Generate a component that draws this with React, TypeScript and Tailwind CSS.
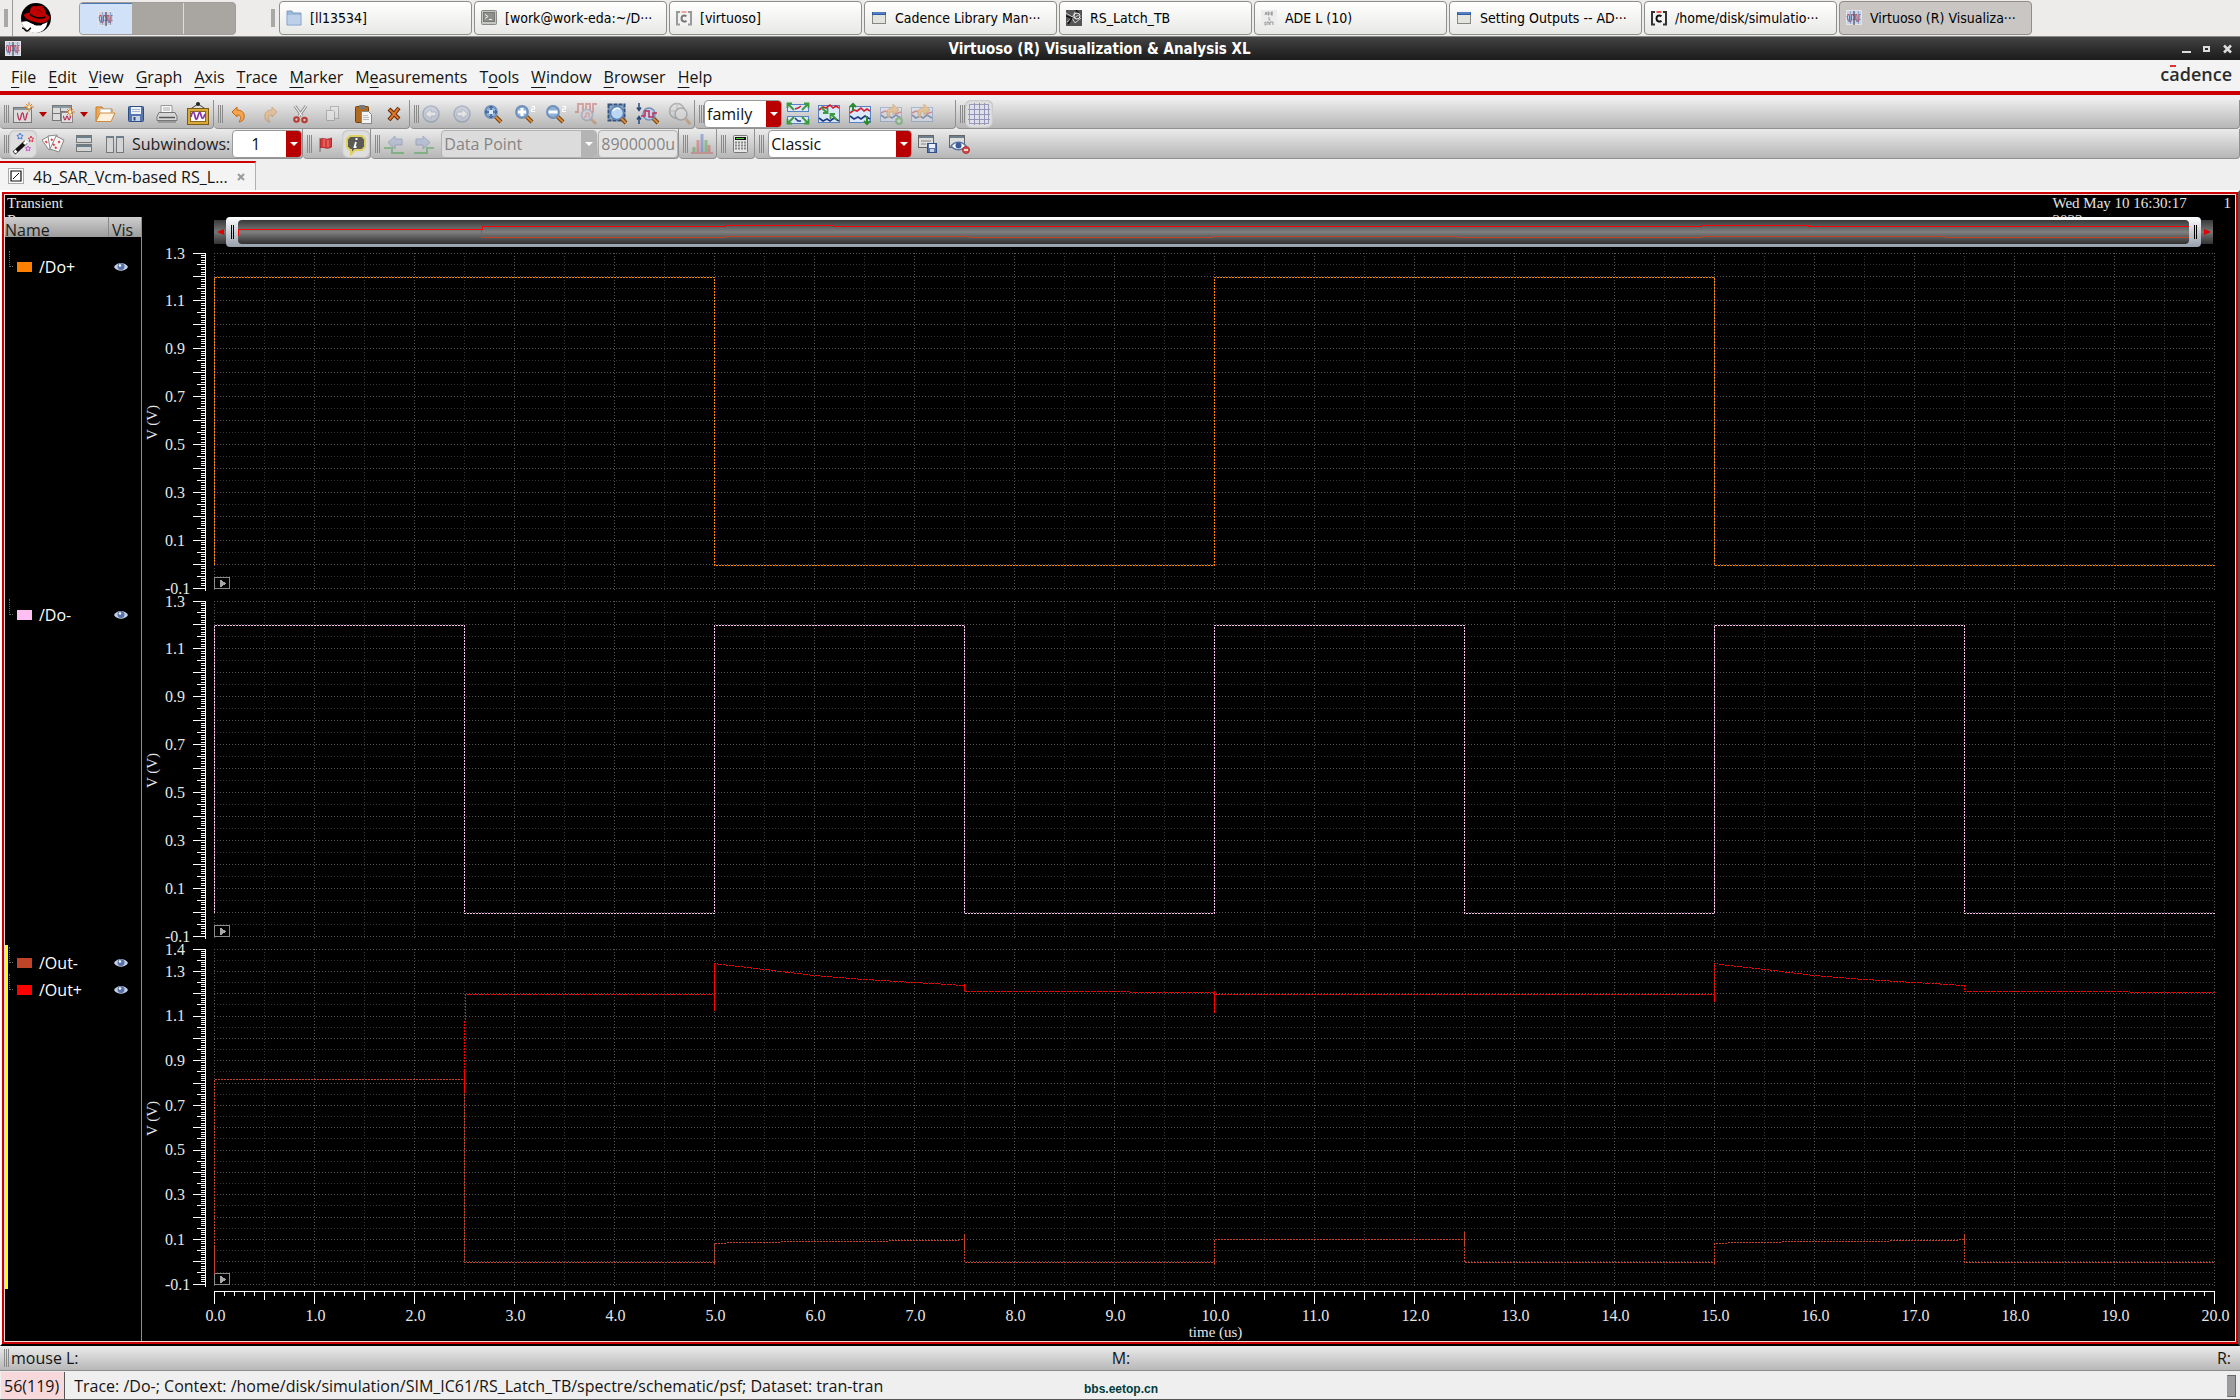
import React, { useLayoutEffect, useRef, useState } from "react";
import type { ReactNode, RefObject } from "react";

const UI = "font-['Open_Sans','Noto_Sans',sans-serif]";
const TASK = "font-['DejaVu_Sans_Condensed','DejaVu_Sans',sans-serif]";
const SERIF = "font-['Liberation_Serif',serif]";

/* ---------- icons ---------- */

function Svg({ w = 24, h = 24, children, faded }: { w?: number; h?: number; children: ReactNode; faded?: boolean }) {
  return (
    <svg width={w} height={h} viewBox={`0 0 ${w} ${h}`} fill="none" className={faded ? "block shrink-0 opacity-40" : "block shrink-0"} aria-hidden="true">
      {children}
    </svg>
  );
}

const WaveIcon = () => (
  <Svg w={16} h={16}>
    <rect x=".5" y=".5" width="15" height="14" fill="#c9d3e4" stroke="#e4e4e6" />
    <path d="M1 4.500h14M1 9.500h14M4.500 1v13M12.500 1v13" stroke="#8ea6d0" />
    <path d="M1.500 10V6l1-2 1 2v4l1 2 1-2V5l1-1 1 2M9 10V6l1-2 1 2v4l1 2 1-2V5l1-1" stroke="#c05060" />
    <path d="M1 6l1 4 1 2 1-2M9 6l1 4 1 2" stroke="#6a84b8" />
    <path d="M8 1v14" stroke="#334" />
  </Svg>
);

const FolderSmall = () => (
  <Svg w={16} h={16}>
    <path d="M1 3V1h5l1 2h8v12H1z" fill="#9db9da" stroke="#7f9dc4" />
    <path d="M1.500 5h13v9.500h-13z" fill="#bcd0ea" />
  </Svg>
);
const TerminalSmall = () => (
  <Svg w={16} h={16}>
    <rect x=".5" y=".5" width="15" height="14" rx="1" fill="#c6c7c3" stroke="#888a85" />
    <rect x="2.500" y="2.500" width="11" height="9" fill="#8d908b" stroke="#777975" />
    <path d="M4 4.500l3 2-3 2M8 9.500h3" stroke="#eee" />
  </Svg>
);
const CSmall = ({ dark }: { dark?: boolean }) => (
  <Svg w={16} h={16}>
    <rect x="1" y="2" width="14" height="12.500" fill="#f2f2f2" stroke={dark ? "#333" : "#999"} strokeWidth="2" />
    <path d="M4 2h8M4 14.500h8" stroke="#f2f2f2" strokeWidth="3" />
    <path d="M5.500 2h5" stroke={dark ? "#e02020" : "#ee8888"} strokeWidth="1.500" />
    <path d="M10.500 6.200c-3.500-2-5 .3-5 2.300s2 4.300 5 2.300" stroke={dark ? "#111" : "#777"} strokeWidth="2" />
  </Svg>
);
const WindowSmall = () => (
  <Svg w={16} h={16}>
    <rect x="1.500" y="2.500" width="13" height="11" fill="#e2e4dd" stroke="#858883" />
    <path d="M1 3.500h14" stroke="#2e5da8" strokeWidth="3" />
    <path d="M2 3h12" stroke="#7fa3d8" />
  </Svg>
);
const SchematicSmall = () => (
  <Svg w={16} h={16}>
    <rect width="16" height="16" fill="#555" />
    <path d="M0 3l8 5 6-4M1 12l5-4 3 5 6-5M9 2l-3 6" stroke="#ccc" />
    <path d="M0 6l6 2-4 6M10 0l3 4" stroke="#111" strokeWidth="1.500" />
    <circle cx="11" cy="6" r="3" stroke="#eee" />
  </Svg>
);
const AdeSmall = () => (
  <Svg w={16} h={16}>
    <rect width="16" height="16" fill="#ededed" />
    <path d="M4 5l1-3 1 3M7 2v3h1V2zM10 2v3h2M10 2h2M10 3.500h2M8 7v3h1.500M5 12h-1v3h1M6 15v-3h2v3M9 15v-3h3v3" stroke="#888" strokeWidth=".8" />
  </Svg>
);

const RedHat = () => (
  <Svg w={32} h={32}>
    <circle cx="16" cy="16" r="15" fill="#000" />
    <path d="M1.500 20c4-1 6-1 9 1 5 3 12 2 17-1-1 7-6 11-12 11S3 26 1.500 20z" fill="#fff" />
    <path d="M2 26c3 0 3 3 5 3s2-2 4-3" stroke="#000" strokeWidth="1.500" />
    <path d="M14 22c3 1 6 1 8 0" stroke="#000" strokeWidth="1.500" />
    <path d="M4 13c1-2 4-2 6-2 0-4 1-7 4-7 3 1 5-1 8 0 3 2 3 5 4 8 3 1 4 3 3 5-2 4-8 5-14 3-5-1-11-4-11-7z" fill="#c00000" />
    <path d="M9.500 12c4 4 11 5 16 3" stroke="#000" strokeWidth="1.600" />
    <path d="M17 7c1 2 4 1 5 4" stroke="#700" />
  </Svg>
);

const Spark = ({ x, y }: { x: number; y: number }) => (
  <g transform={`translate(${x} ${y})`}>
    <path d="M0-5V5M-5 0H5M-3-3L3 3M3-3L-3 3" stroke="#e0822a" />
    <circle r="1.500" fill="#fff0c0" />
  </g>
);
const NewGraph = () => (
  <Svg w={24} h={24}>
    <rect x="2.500" y="5.500" width="18" height="15" fill="#dcdcdc" stroke="#777" />
    <path d="M3 7h17" stroke="#8a9aa5" strokeWidth="2" />
    <path d="M6 11c1 0 1 7 2.500 7S10 11 11.500 11s1 7 2.500 7 1-7 3-7" stroke="#b8325a" strokeWidth="1.300" />
    <Spark x={18} y={5} />
  </Svg>
);
const NewSub = () => (
  <Svg w={24} h={24}>
    <rect x="1.500" y="3.500" width="19" height="15" fill="#dcdcdc" stroke="#777" />
    <path d="M2 5h18" stroke="#8a9aa5" strokeWidth="2" />
    <path d="M9.500 6v12M2 11.500h7M10 9.500h10" stroke="#777" />
    <rect x="10.500" y="10.500" width="11" height="10" fill="#e2e2e2" stroke="#888" />
    <path d="M12 14c1 0 1 4 2 4s1-4 2-4 1 4 2 4 1-3 2-4" stroke="#b8325a" strokeWidth="1.200" />
    <Spark x={19} y={10} />
  </Svg>
);
const FolderOpen = () => (
  <Svg>
    <path d="M3 19V5h6l2 2h8v3" fill="#f0a850" stroke="#c77820" />
    <path d="M7 7h11v6H7z" fill="#fff" stroke="#bbb" />
    <path d="M3 19.500L7 11h15l-4 8.500z" fill="#fdf0dc" stroke="#d08a3c" />
  </Svg>
);
const Save = () => (
  <Svg>
    <rect x="4.500" y="4.500" width="15" height="15" rx="1" fill="#5676ad" stroke="#2f4d85" />
    <rect x="7" y="5" width="10" height="7" fill="#eef2f8" />
    <path d="M8 7.500h8M8 9.500h8" stroke="#a8b8d0" />
    <rect x="8" y="14" width="8" height="5" fill="#c8d2e4" />
    <rect x="9.500" y="15" width="2" height="3.500" fill="#2f4d85" />
  </Svg>
);
const Print = () => (
  <Svg>
    <path d="M6 11V3.500h11V11" fill="#fafafa" stroke="#999" />
    <path d="M8 6h7M8 8h7" stroke="#aaa" />
    <path d="M4 10.500h16l2 4v4H2v-4z" fill="#d6d6d6" stroke="#777" />
    <path d="M4 15.500h16" stroke="#555" strokeWidth="1.500" />
    <path d="M3 20h18" stroke="#999" strokeWidth="2" />
  </Svg>
);
const Frame = () => (
  <Svg>
    <path d="M12 2L3 8M12 2l9 6" stroke="#444" />
    <circle cx="12" cy="2" r="2" fill="#222" />
    <rect x="1.500" y="6.500" width="21" height="16" fill="#d9a93a" stroke="#7a5a14" />
    <rect x="4.500" y="9.500" width="15" height="10" fill="#fff" stroke="#8a6a20" />
    <path d="M5 15c1-6 3-6 4-1s2 4 3 0 2-5 3-1 2 5 4-1" stroke="#8a3aa8" strokeWidth="1.800" />
  </Svg>
);
const Undo = () => (
  <Svg>
    <path d="M5 10l5-5v3c6 0 8 4 7 8-1 3-3 4-5 4 2-3 3-7-2-7v2z" fill="#f6a34e" stroke="#c06a18" />
  </Svg>
);
const Redo = () => (
  <Svg faded>
    <path d="M19 10l-5-5v3c-6 0-8 4-7 8 1 3 3 4 5 4-2-3-3-7 2-7v2z" fill="#f6a34e" stroke="#c06a18" />
  </Svg>
);
const Cut = () => (
  <Svg w={20}>
    <path d="M4 4l7 10M15 4L8 14" stroke="#888" strokeWidth="3" />
    <path d="M4 4l7 10M15 4L8 14" stroke="#f4f4f4" strokeWidth="1.200" />
    <circle cx="5.500" cy="17.500" r="2.300" stroke="#b83830" strokeWidth="2" />
    <circle cx="13.500" cy="18" r="2.300" stroke="#b83830" strokeWidth="2" />
  </Svg>
);
const Copy = () => (
  <Svg faded>
    <rect x="10.500" y="4.500" width="8" height="12" fill="#eee" stroke="#777" />
    <path d="M6.500 8.500h7l1 1v9h-8z" fill="#f6f6f6" stroke="#777" />
  </Svg>
);
const Paste = () => (
  <Svg>
    <rect x="4.500" y="4.500" width="13" height="16" rx="1" fill="#b06a20" stroke="#6f4210" />
    <rect x="8" y="3" width="6" height="4" rx="1" fill="#777" />
    <path d="M10.500 9.500h7l3 3v9h-10z" fill="#f4f4f4" stroke="#888" />
    <path d="M12 13.500h5M12 15.500h6M12 17.500h6" stroke="#bbb" />
  </Svg>
);
const Delete = () => (
  <Svg>
    <path d="M7 7l10 10M17 6L7 18" stroke="#5a2a08" strokeWidth="4" />
    <path d="M7.500 7.500l9 9M16.500 6.500l-9 11" stroke="#e0762a" strokeWidth="2" />
  </Svg>
);
const NavArrow = ({ flip }: { flip?: boolean }) => (
  <Svg faded>
    <circle cx="12" cy="12" r="8" fill="#b5c2da" stroke="#6378a0" strokeWidth="1.500" />
    <path d={flip ? "M7 10h5V7l6 5-6 5v-3H7z" : "M17 10h-5V7l-6 5 6 5v-3h5z"} fill="#fff" stroke="#8294b8" />
  </Svg>
);
const Lens = ({ children, sup, faded }: { children?: ReactNode; sup?: boolean; faded?: boolean }) => (
  <Svg faded={faded}>
    <path d="M14 14l6 6" stroke="#6f4210" strokeWidth="4" />
    <path d="M14 14l6 6" stroke="#d98a3a" strokeWidth="2" />
    <circle cx="10" cy="10" r="6" fill="#8fb0d8" stroke="#6f8fb8" strokeWidth="1.800" />
    {children}
    {sup && <path d="M19.500 4.500h3v2.500h-3v2.500h3.500" stroke="#fff" strokeWidth="1.200" />}
  </Svg>
);
const ZoomFit = () => (
  <Lens>
    <path d="M10 4v12M4 10h12" stroke="#3d6498" strokeWidth="1.500" />
    <path d="M8 8h4v4H8z" fill="#dce8f8" />
    <path d="M8 6l2-2 2 2M8 14l2 2 2-2M6 8l-2 2 2 2M14 8l2 2-2 2" stroke="#3d6498" />
  </Lens>
);
const ZoomIn = () => (
  <Lens sup>
    <path d="M10 6v8M6 10h8" stroke="#fff" strokeWidth="3" />
  </Lens>
);
const ZoomOut = () => (
  <Lens sup>
    <path d="M5.500 10h9" stroke="#fff" strokeWidth="3" />
  </Lens>
);
const ZoomWave = () => (
  <Svg faded>
    <path d="M1 10h3V2h5v8h3V2h4v8h3V2h4" stroke="#c04040" strokeWidth="1.800" />
    <path d="M17 17l5 5" stroke="#b87030" strokeWidth="3" />
    <circle cx="13" cy="13" r="5.500" fill="#d6c8d8" stroke="#6f7fa8" strokeWidth="1.500" />
    <path d="M10 15h2v-4h3v4h1" stroke="#c04040" />
  </Svg>
);
const ZoomArea = () => (
  <Svg>
    <rect x="3.500" y="2.500" width="16" height="16" fill="#8fa8c8" stroke="#35527e" strokeWidth="2" strokeDasharray="4 1" />
    <path d="M16 16l5 5" stroke="#6f4210" strokeWidth="4" />
    <path d="M16 16l5 5" stroke="#d98a3a" strokeWidth="2" />
    <circle cx="12" cy="11" r="6.500" fill="#bcd7f3" stroke="#5b83b8" strokeWidth="1.500" />
    <path d="M8 9c2-3 5-3 7-2" stroke="#fff" strokeWidth="1.500" />
  </Svg>
);
const ZoomY = () => (
  <Svg>
    <path d="M3 1v7M1 5.500l2 3 2-3M3 22v-7M1 17.500l2-3 2 3" stroke="#27497c" strokeWidth="1.500" />
    <path d="M17 16l5 5" stroke="#6f4210" strokeWidth="4" />
    <path d="M17 16l5 5" stroke="#d98a3a" strokeWidth="2" />
    <circle cx="13" cy="12" r="6" fill="#c7cfe8" stroke="#6f8fb8" strokeWidth="1.500" />
    <path d="M5 14h4V9h4v6h4v-4h4" stroke="#b83058" strokeWidth="1.500" />
  </Svg>
);
const ZoomDim = () => (
  <Svg faded>
    <circle cx="9" cy="9" r="7.500" stroke="#666" strokeWidth="1.500" />
    <path d="M9 1v16M1 9h16" stroke="#888" />
    <circle cx="13" cy="12" r="6" fill="#ddd" stroke="#666" strokeWidth="1.500" />
    <path d="M18 17l4 5" stroke="#b87030" strokeWidth="3" />
  </Svg>
);
const Strip = ({ y, h }: { y: number; h: number }) => <rect x="1.500" y={y + 0.5} width="21" height={h} fill="#dbe7fa" stroke="#5b82c0" />;
const RedWave = ({ y }: { y: number }) => <path d={`M2 ${y + 4}l4-3 3 1 4-3 3 3 3-2 3 2`} stroke="#d02030" strokeWidth="1.600" />;
const BlueWave = ({ y }: { y: number }) => <path d={`M2 ${y + 1}l4 3 4-2 3 2 4-3 5 3`} stroke="#203a80" strokeWidth="1.600" />;
const SplitStrips = () => (
  <Svg w={24} h={24}>
    <Strip y={2} h={7} />
    <Strip y={14} h={7} />
    <path d="M9 7l3-1 3-2" stroke="#d02030" strokeWidth="1.500" />
    <path d="M9 16l3 3 3 0" stroke="#203a80" strokeWidth="1.500" />
    <path d="M8 8L2 2M1.500 6V1.500H6M16 8l6-6M18 1.500h4.500V6M8 15l-6 6M1.500 17v4.500H6M16 15l6 6M22.500 17v4.500H18" stroke="#3a9a3c" strokeWidth="1.800" />
  </Svg>
);
const CombineStrips = () => (
  <Svg w={24} h={24}>
    <Strip y={3} h={17} />
    <RedWave y={4} />
    <BlueWave y={15} />
    <path d="M4 5l6 6M10.500 6v5H6M20 18l-6-6M13.500 17v-5H18" stroke="#3a9a3c" strokeWidth="1.800" />
  </Svg>
);
const StripsY = () => (
  <Svg w={24} h={24}>
    <Strip y={4} h={16} />
    <RedWave y={7} />
    <BlueWave y={13} />
    <path d="M5 9V2M2 5l3-3 3 3M19 14v8M16 19l3 3 3-3" stroke="#2c8a30" strokeWidth="2" />
  </Svg>
);
const SwapStrip = ({ plus }: { plus?: boolean }) => (
  <Svg w={24} h={24} faded>
    <Strip y={5} h={14} />
    <path d="M2 11l4-2 3 1M16 12l6-2" stroke="#d02030" strokeWidth="1.600" />
    <BlueWave y={12} />
    <path d="M9 15c-3-6 1-10 5-9V2l6 6-6 5V10c-3-1-4 1-3 5z" fill="#f0a040" stroke="#c07820" />
    {plus && <circle cx="20" cy="19" r="4" fill="#3a9a3a" />}
    {plus && <path d="M20 17v4M18 19h4" stroke="#fff" />}
  </Svg>
);
const GridIcon = () => (
  <Svg>
    <rect x="2.500" y="2.500" width="19" height="19" fill="#dfe0ea" stroke="#9c9cb8" />
    <path d="M7.500 1v22M12.500 1v22M17.500 1v22M1 7.500h22M1 12.500h22M1 17.500h22" stroke="#9494b8" />
  </Svg>
);
const Wand = () => (
  <Svg>
    <path d="M3 21L15 10" stroke="#111" strokeWidth="4" />
    <path d="M3.500 20.500l2-1.800M13 12l3-2.800" stroke="#fff" strokeWidth="3" />
    <path d="M9 1l1 2 2 .5-1.500 1.500.5 2-2-1-2 1 .5-2L6 3.500 8 3z" stroke="#4a7ae0" />
    <path d="M20 4l.8 2 2 .3-1.500 1.400.4 2L20 8.700l-1.700 1 .4-2L17.200 6.300l2-.3z" stroke="#e03848" />
    <path d="M17 14l.8 1.500 1.700.3-1.200 1.200.3 1.700-1.600-.8-1.600.8.3-1.700-1.200-1.200 1.700-.3z" stroke="#c050c8" />
  </Svg>
);
const Cards = () => (
  <Svg w={24} h={24}>
    <path d="M1 8l7-4 6 11-6 3z" fill="#fafafa" stroke="#888" />
    <path d="M7 4l9-1 1 13-8 1z" fill="#fff" stroke="#888" />
    <path d="M15 4l8 4-5 12-9-3z" fill="#f8f2f2" stroke="#888" />
    <path d="M4.500 9l1.500 2M10 7l1.500 1.500M12 12l1.500 1.500M17.500 9l1 2M14 15l1.500 1.500" stroke="#d84040" strokeWidth="1.800" />
  </Svg>
);
const RowsIcon = () => (
  <Svg>
    <rect x="4.500" y="3.500" width="15" height="7" fill="#d2d4d6" stroke="#777" />
    <rect x="4.500" y="12.500" width="15" height="7" fill="#d2d4d6" stroke="#777" />
    <path d="M4 5h16M4 14h16" stroke="#6e7f8c" strokeWidth="2" />
  </Svg>
);
const ColsIcon = () => (
  <Svg>
    <rect x="3.500" y="4.500" width="7" height="16" fill="#d2d4d6" stroke="#777" />
    <rect x="13.500" y="4.500" width="7" height="16" fill="#d2d4d6" stroke="#777" />
    <path d="M3 5h8M13 5h8" stroke="#6e7f8c" strokeWidth="2" />
  </Svg>
);
const Flag = () => (
  <Svg w={16}>
    <path d="M2 6v14" stroke="#888" strokeWidth="1.500" />
    <path d="M2.500 7c3-2 5 2 11-1v9c-5 3-8-1-11 1z" fill="#d83a3a" stroke="#a83030" />
    <path d="M6 7v8M10 8v7" stroke="#f08080" />
  </Svg>
);
const Info = () => (
  <Svg>
    <path d="M6 4h12l3 3v8l-3 3h-7l-4 4v-4H6l-3-3V7z" fill="#5a5a56" stroke="#e0d060" strokeWidth="2" />
    <path d="M13.500 7h-2M12 10l-1.500 5h2" stroke="#fff" strokeWidth="1.800" />
  </Svg>
);
const StepArrow = ({ flip }: { flip?: boolean }) => (
  <Svg faded>
    <path d={flip ? "M2 21h13v-5h7" : "M22 21H10v-5H2"} stroke="#2c9a30" strokeWidth="2" />
    <path d={flip ? "M4 7h7V4l7 6.500-7 6.500v-4H4z" : "M20 7h-7V4l-7 6.500 7 6.500v-4h7z"} fill="#8ea2cc" stroke="#5068a0" />
  </Svg>
);
const Histogram = () => (
  <Svg faded>
    <path d="M1 21h22" stroke="#c03030" strokeWidth="1.500" />
    <path d="M4 20v-5M16 20V8" stroke="#2c9a30" strokeWidth="3" />
    <path d="M8 20V8M19 20v-7" stroke="#d04040" strokeWidth="3" />
    <path d="M12 20V2" stroke="#4060c0" strokeWidth="3" />
  </Svg>
);
const Calc = () => (
  <Svg>
    <rect x="5.500" y="3.500" width="14" height="17" rx="1" fill="#e6e6e6" stroke="#777" />
    <rect x="7" y="5" width="11" height="3" fill="#111" />
    <path d="M8 6.500h8" stroke="#50d040" />
    <path d="M7 10.500h11M7 13.500h11M7 16.500h11" stroke="#888" strokeWidth="2" strokeDasharray="2 1" />
  </Svg>
);
const WindowBack = () => (
  <>
    <rect x="2.500" y="3.500" width="15" height="12" fill="#ddd" stroke="#666" />
    <path d="M3 5h14" stroke="#6e7f8c" strokeWidth="2" />
  </>
);
const SaveView = () => (
  <Svg>
    <WindowBack />
    <path d="M5 9h10M5 12h5" stroke="#888" />
    <rect x="11.500" y="11.500" width="9" height="9" fill="#5676ad" stroke="#334f88" />
    <rect x="13" y="12" width="6" height="4" fill="#eef" />
    <rect x="14" y="17" width="4" height="3" fill="#c8d2e4" />
  </Svg>
);
const HideView = () => (
  <Svg>
    <WindowBack />
    <path d="M4 14c4-5 11-5 15 0-4 5-11 5-15 0z" fill="#fff" stroke="#5a76a8" strokeWidth="1.500" />
    <circle cx="11.500" cy="13.500" r="3" fill="#3a5a98" />
    <circle cx="19" cy="18" r="3.500" fill="#d84848" stroke="#a83838" />
    <path d="M17 18h4" stroke="#fff" strokeWidth="1.500" />
  </Svg>
);
const Eye = () => (
  <Svg w={14} h={10}>
    <path d="M0 5C3-.5 11-.5 14 5 11 10 3 10 0 5z" fill="#c4d0e4" />
    <circle cx="7" cy="4.500" r="3.500" fill="#5872a8" />
    <circle cx="6" cy="3.500" r="1.200" fill="#fff" />
  </Svg>
);

/* ---------- small controls ---------- */

const Handle = () => <span className="ml-1 h-[18px] w-[5px] shrink-0 border-x border-[#8a8a8a] bg-[linear-gradient(90deg,transparent_1px,#8a8a8a_1px,#8a8a8a_2px,transparent_2px)]" />;

function Tool({ label, children, checked, w = "w-[31px]" }: { label: string; children: ReactNode; checked?: boolean; w?: string }) {
  return (
    <button
      type="button"
      aria-label={label}
      title={label}
      className={`${w} flex h-7 shrink-0 items-center justify-center rounded-md ${checked ? "bg-[#dedede] shadow-[inset_0_0_2px_#999]" : ""}`}
    >
      {children}
    </button>
  );
}

const Drop = ({ label }: { label: string }) => (
  <button type="button" aria-label={label} className="flex h-7 w-[11px] shrink-0 items-center justify-center">
    <Svg w={8} h={5}>
      <path d="M0 0h8L4 5z" fill="#b80000" />
    </Svg>
  </button>
);

function Combo({ label, value, w, disabled, pad = "pl-1" }: { label: string; value: string; w: string; disabled?: boolean; pad?: string }) {
  return (
    <span className={`${w} flex h-7 shrink-0 overflow-hidden rounded border ${disabled ? "border-[#b2b2b2] bg-[#dcdcdc]" : "border-[#999] bg-white"}`}>
      <select
        aria-label={label}
        disabled={disabled}
        className={`${pad} min-w-0 flex-1 appearance-none bg-transparent text-base leading-6 outline-none ${disabled ? "text-[#858585]" : "text-[#111]"}`}
      >
        <option>{value}</option>
      </select>
      <span className={`pointer-events-none flex w-[15px] items-center justify-center ${disabled ? "bg-[#b4b4b4]" : "bg-[#b80000]"}`}>
        <Svg w={8} h={4}>
          <path d="M0 0h8L4 4z" fill="#fff" />
        </Svg>
      </span>
    </span>
  );
}

function Group({ children, grow }: { children: ReactNode; grow?: boolean }) {
  return (
    <div
      className={`flex shrink-0 items-center rounded-b border-b border-r border-[#909090] bg-linear-to-b from-[#ebebeb] to-[#b6b6b6] ${grow ? "flex-1" : ""}`}
    >
      {children}
    </div>
  );
}

/* ---------- charts ---------- */

function useSize(): [RefObject<HTMLDivElement | null>, { w: number; h: number }] {
  const ref = useRef<HTMLDivElement | null>(null);
  const [size, setSize] = useState({ w: 0, h: 0 });
  useLayoutEffect(() => {
    const el = ref.current;
    if (!el) return;
    const read = () => setSize({ w: el.clientWidth, h: el.clientHeight });
    read();
    const ro = new ResizeObserver(read);
    ro.observe(el);
    return () => ro.disconnect();
  }, []);
  return [ref, size];
}

const X0 = 72;
const XR = 21;
const PAD_TOP = 8;
const PAD_BOTTOM = 5;
const snap = (v: number) => Math.floor(v) + 0.5;
const timeX = (t: number, w: number) => snap(X0 + ((w - X0 - XR) * t) / 20);

type Pt = [number, number];
type Trace = { color: string; pts: Pt[]; solid?: Pt[][] };
type StripData = { max: number; steps: number; labels: number[]; traces: Trace[] };

const square = (half: number): Pt[] => {
  const out: Pt[] = [[0, 0]];
  for (let t = 0, on = true; t < 20; t += half, on = !on) {
    const v = on ? 1.2 : 0;
    out.push([t, v], [t + half, v]);
  }
  return out;
};

const decay = (t: number): Pt[] => [
  [t, 1.19],
  [t, 1.34],
  [t + 0.06, 1.335],
  [t + 0.5, 1.313],
  [t + 1, 1.286],
  [t + 1.5, 1.269],
  [t + 2, 1.255],
  [t + 2.5, 1.24],
  [t + 2.5, 1.213],
  [t + 4.15, 1.213],
  [t + 4.16, 1.208],
];
const rise = (t: number): Pt[] => [
  [t, 0],
  [t, 0.085],
  [t + 0.25, 0.089],
  [t + 1.1, 0.095],
  [t + 2.4, 0.099],
  [t + 2.5, 0.102],
  [t + 2.5, 0],
];

const STRIPS: StripData[] = [
  { max: 1.3, steps: 28, labels: [1.3, 1.1, 0.9, 0.7, 0.5, 0.3, 0.1, -0.1], traces: [{ color: "#ff8800", pts: square(5) }] },
  { max: 1.3, steps: 28, labels: [1.3, 1.1, 0.9, 0.7, 0.5, 0.3, 0.1, -0.1], traces: [{ color: "#ffc0f2", pts: square(2.5) }] },
  {
    max: 1.4,
    steps: 30,
    labels: [1.4, 1.3, 1.1, 0.9, 0.7, 0.5, 0.3, 0.1, -0.1],
    traces: [
      {
        color: "#c04428",
        pts: [[0, 0], [0, 0.82], [2.5, 0.82], [2.5, 0], [5, 0], ...rise(5), [10, 0], [10, 0.104], [12.5, 0.104], [12.5, 0], [15, 0], ...rise(15), [20, 0]],
        solid: [
          [[0, 0.08], [0, -0.05]],
          [[5, 0.02], [5, -0.01]],
          [[7.5, 0.13], [7.5, 0.07]],
          [[10, 0.02], [10, -0.01]],
          [[12.5, 0.14], [12.5, 0.08]],
          [[15, 0.02], [15, -0.01]],
          [[17.5, 0.13], [17.5, 0.09]],
        ],
      },
      {
        color: "#ff0000",
        pts: [[2.5, 0.76], [2.5, 0.97], [2.51, 1.2], [5, 1.2], ...decay(5), [10, 1.208], [10, 1.2], [15, 1.2], ...decay(15), [20, 1.208]],
        solid: [
          [[2.5, 0.86], [2.5, 0.76]],
          [[5, 1.34], [5, 1.13]],
          [[7.5, 1.25], [7.5, 1.22]],
          [[10, 1.22], [10, 1.12]],
          [[15, 1.2], [15, 1.17]],
        ],
      },
    ],
  },
];

const MAJOR = "#585858";
const MINOR = "#363636";
const LABEL = "#e6e6e6";

function StripChart({ data }: { data: StripData }) {
  const [ref, { w, h }] = useSize();
  const bottomV = -0.1;
  const ph = h - PAD_TOP - PAD_BOTTOM;
  const y = (v: number) => snap(PAD_TOP + (ph * (data.max - v)) / (data.max - bottomV));
  const x = (t: number) => timeX(t, w);
  const path = (pts: Pt[]) => pts.map(([t, v], i) => `${i ? "L" : "M"}${x(t)} ${y(v) + 1}`).join("");
  const right = x(20);
  const level = (i: number) => data.max - i * 0.05;
  return (
    <div ref={ref} className="min-w-0 flex-1">
      {w > 0 && (
        <svg width={w} height={h} className={`${SERIF} block overflow-visible text-base`} shapeRendering="crispEdges" fill="none">
          {Array.from({ length: data.steps + 1 }, (_, i) => (
            <path key={`h${i}`} d={`M${X0} ${y(level(i))}H${right}`} stroke={i % 2 ? MINOR : MAJOR} strokeDasharray="1 2" />
          ))}
          {Array.from({ length: 41 }, (_, i) => (
            <path key={`v${i}`} d={`M${x(i / 2)} ${PAD_TOP}V${y(bottomV) + 1}`} stroke={i % 2 ? MINOR : MAJOR} strokeDasharray="1 2" />
          ))}
          <path d={`M63.500 ${PAD_TOP}V${y(bottomV) + 2}`} stroke="#fff" />
          {Array.from({ length: data.steps * 5 + 1 }, (_, i) => (
            <path key={`t${i}`} d={`M${i % 10 === 0 ? 51 : i % 5 === 0 ? 55 : 59} ${y(data.max - i * 0.01)}H63`} stroke="#fff" />
          ))}
          {data.labels.map((v) => (
            <text key={v} x="23" y={y(v) + 5} fill={LABEL}>
              {v.toFixed(1)}
            </text>
          ))}
          <text transform={`translate(15 ${PAD_TOP + ph / 2 + 2}) rotate(-90)`} textAnchor="middle" fill={LABEL} className="text-[15px]">
            V (V)
          </text>
          <rect x={X0 + 0.5} y={y(bottomV) - 11} width="15" height="11" fill="#000" stroke="#8c8c8c" />
          <path d={`M${X0 + 6} ${y(bottomV) - 9}l6 4-6 4z`} fill="#a8a8a8" />
          {data.traces.map((tr) => (
            <g key={tr.color} stroke={tr.color}>
              <path d={path(tr.pts)} strokeDasharray="2 1" strokeDashoffset={-0.5} />
              {tr.solid?.map((s, i) => <path key={i} d={path(s)} />)}
            </g>
          ))}
        </svg>
      )}
    </div>
  );
}

function TimeAxis() {
  const [ref, { w, h }] = useSize();
  return (
    <div ref={ref} className="min-w-0 flex-1">
      {w > 0 && (
        <svg width={w} height={h} className={`${SERIF} block overflow-visible text-base`} shapeRendering="crispEdges" fill="none">
          <path d={`M${X0} 2.500H${timeX(20, w) + 0.5}`} stroke="#fff" />
          {Array.from({ length: 201 }, (_, i) => (
            <path key={i} d={`M${timeX(i / 10, w)} 3V${i % 10 === 0 ? 15 : i % 5 === 0 ? 11 : 7}`} stroke="#fff" />
          ))}
          {Array.from({ length: 21 }, (_, i) => (
            <text key={i} x={timeX(i, w) + 1} y="32" textAnchor="middle" fill={LABEL}>
              {i.toFixed(1)}
            </text>
          ))}
          <text x={timeX(10, w) + 1} y="48" textAnchor="middle" fill={LABEL} className="text-[15px]">
            time (us)
          </text>
        </svg>
      )}
    </div>
  );
}

const RED_MINI: Pt[] = [[0, 15], [0, 9], [2.51, 9], [2.51, 6], [5, 6], [5, 5], [6.1, 5], [6.1, 6], [15, 6], [15, 5], [16.1, 5], [16.1, 6], [20, 6]];
const BROWN_MINI: Pt[] = [[2.5, 9], [2.5, 17], [5, 17], [5, 16], [7.5, 16], [7.5, 17], [10, 17], [10, 16], [12.5, 16], [12.5, 17], [15, 17], [15, 16], [17.5, 16], [17.5, 17], [20, 17]];

function Overview() {
  const [ref, { w }] = useSize();
  const path = (pts: Pt[]) => pts.map(([t, y], i) => `${i ? "L" : "M"}${snap((w * t) / 20)} ${y + 0.5}`).join("");
  const grip = "flex w-3 shrink-0 items-center justify-center";
  const bars = <span className="h-[14px] w-[3px] border-x border-black" />;
  const track = "flex h-6 w-3 shrink-0 items-center justify-center bg-linear-to-b from-[#3a3a3a] via-[#777] to-[#333]";
  return (
    <div className="ml-[72px] mr-[22px] flex items-center">
      <button type="button" aria-label="Scroll left" className={track}>
        <Svg w={7} h={6}>
          <path d="M7 0v6L0 3z" fill="#e00000" />
        </Svg>
      </button>
      <div className="flex h-[30px] min-w-0 flex-1 rounded bg-linear-to-b from-white to-[#98a0ac]">
        <button type="button" aria-label="Range start" className={grip}>
          {bars}
        </button>
        <div ref={ref} className="my-[3px] h-6 min-w-0 flex-1 overflow-hidden rounded-sm bg-linear-to-b from-[#383838] via-[#808080] to-[#303030]">
          <svg width={w} height="24" className="block" shapeRendering="crispEdges" fill="none">
            <path d={path(BROWN_MINI)} stroke="#c04428" />
            <path d={path(RED_MINI)} stroke="#ff0000" />
          </svg>
        </div>
        <button type="button" aria-label="Range end" className={grip}>
          {bars}
        </button>
      </div>
      <button type="button" aria-label="Scroll right" className={track}>
        <Svg w={7} h={6}>
          <path d="M0 0v6l7-3z" fill="#e00000" />
        </Svg>
      </button>
    </div>
  );
}

/* ---------- page ---------- */

const TASKS: [string, ReactNode][] = [
  ["[ll13534]", <FolderSmall />],
  ["[work@work-eda:~/D···", <TerminalSmall />],
  ["[virtuoso]", <CSmall />],
  ["Cadence Library Man···", <WindowSmall />],
  ["RS_Latch_TB", <SchematicSmall />],
  ["ADE L (10)", <AdeSmall />],
  ["Setting Outputs -- AD···", <WindowSmall />],
  ["/home/disk/simulatio···", <CSmall dark />],
  ["Virtuoso (R) Visualiza···", <WaveIcon />],
];

/* The number is the position of the underlined access key. */
const MENUS: [string, number][] = [
  ["File", 0],
  ["Edit", 0],
  ["View", 0],
  ["Graph", 0],
  ["Axis", 0],
  ["Trace", 0],
  ["Marker", 0],
  ["Measurements", 1],
  ["Tools", 1],
  ["Window", 0],
  ["Browser", 0],
  ["Help", 0],
];

const LEGENDS: { name: string; swatch: string }[][] = [
  [{ name: "/Do+", swatch: "bg-[#ff8000]" }],
  [{ name: "/Do-", swatch: "bg-[#ffbff2]" }],
  [
    { name: "/Out-", swatch: "bg-[#c04428]" },
    { name: "/Out+", swatch: "bg-[#ff0000]" },
  ],
];

const Dots = () => <span className="block h-[18px] w-1 shrink-0 bg-[radial-gradient(#a8a8a4_1px,transparent_1px)] bg-[size:2px_3px]" />;

export default function App() {
  return (
    <div className={`${UI} flex h-screen flex-col overflow-hidden bg-[#efefef] text-base text-[#141414]`}>
      {/* Desktop panel */}
      <header className="flex h-[37px] shrink-0 items-center border-b border-[#888] bg-[#edecea]">
        <span className="ml-1">
          <Dots />
        </span>
        <span className="ml-1 h-full w-px bg-[#999]" />
        <button type="button" aria-label="Applications" className="ml-[7px]">
          <RedHat />
        </button>
        <div className="ml-[27px] flex h-[33px] overflow-hidden rounded-sm border border-[#a09d9a] bg-[#a9a5a1]">
          <button type="button" aria-label="Workspace 1" className="flex w-[52px] items-center justify-center border-t border-[#4a76b0] bg-[#d0e1f8]">
            <WaveIcon />
          </button>
          <button type="button" aria-label="Workspace 2" className="w-[52px] border-r border-[#dedcda]" />
          <button type="button" aria-label="Workspace 3" className="w-[51px]" />
        </div>
        <span className="ml-[35px] flex w-1">
          <Dots />
        </span>
        <nav className={`${TASK} ml-1 flex gap-[2px] text-sm text-black`}>
          {TASKS.map(([t, icon], i) => (
            <button
              key={t}
              type="button"
              className={`flex h-[34px] w-[193px] items-center gap-2 whitespace-nowrap rounded border border-[#908e8a] pl-1.5 ${
                i === 8 ? "bg-[#c9c6c3]" : "bg-linear-to-b from-white to-[#e8e8e6]"
              }`}
            >
              {icon}
              {t}
            </button>
          ))}
        </nav>
      </header>

      {/* Title bar */}
      <div className="flex h-[23px] shrink-0 items-center bg-linear-to-b from-[#444] via-[#2e2e2e] to-[#1c1c1c] pl-[5px] text-white">
        <WaveIcon />
        <h1 className={`${TASK} min-w-0 flex-1 text-center text-[15px] font-bold leading-5`}>Virtuoso (R) Visualization &amp; Analysis XL</h1>
        <div className="mr-1 flex gap-[4px]">
          <button type="button" aria-label="Minimize" className="p-1">
            <Svg w={9} h={10}>
              <path d="M0 8h9" stroke="#ddd" strokeWidth="2" />
            </Svg>
          </button>
          <button type="button" aria-label="Maximize" className="p-1">
            <Svg w={8} h={10}>
              <rect x="1" y="3" width="5" height="4" stroke="#ddd" strokeWidth="2" />
            </Svg>
          </button>
          <button type="button" aria-label="Close" className="p-1">
            <Svg w={9} h={10}>
              <path d="M1 1.500l7 7M8 1.500l-7 7" stroke="#ddd" strokeWidth="2.500" />
            </Svg>
          </button>
        </div>
      </div>

      {/* Menu bar */}
      <div className="flex h-[35px] shrink-0 items-center border-b-4 border-[#cc0000] bg-[#f3f3f3] pl-[5px] pr-2">
        <nav className="flex flex-1 pt-0.5">
          {MENUS.map(([m, k]) => (
            <button key={m} type="button" className="px-[6px]">
              {m.slice(0, k)}
              <span className="underline underline-offset-4">{m[k]}</span>
              {m.slice(k + 1)}
            </button>
          ))}
        </nav>
        <span className="relative mb-1 text-lg font-semibold leading-6 text-[#2c2c2c]">
          cadence
          <span className="absolute left-[10px] top-[3px] h-[2px] w-1.5 bg-[#e03030]" />
        </span>
      </div>

      {/* Toolbars */}
      <div className="mt-[5px] flex h-[29px] shrink-0">
        <Group>
          <Handle />
          <Tool label="New window" w="w-[28px]"><NewGraph /></Tool>
          <Drop label="New window options" />
          <Tool label="New subwindow" w="w-[30px]"><NewSub /></Tool>
          <Drop label="New subwindow options" />
          <Tool label="Open"><FolderOpen /></Tool>
          <Tool label="Save"><Save /></Tool>
          <Tool label="Print"><Print /></Tool>
          <Tool label="Save image"><Frame /></Tool>
        </Group>
        <Group>
          <Handle />
          <Tool label="Undo"><Undo /></Tool>
          <Tool label="Redo"><Redo /></Tool>
          <Tool label="Cut"><Cut /></Tool>
          <Tool label="Copy"><Copy /></Tool>
          <Tool label="Paste"><Paste /></Tool>
          <Tool label="Delete"><Delete /></Tool>
        </Group>
        <Group>
          <Handle />
          <Tool label="Back" w="w-[24px]"><NavArrow /></Tool>
          <Tool label="Forward" w="w-[37px]"><NavArrow flip /></Tool>
          <Tool label="Fit" w="w-[25px]"><ZoomFit /></Tool>
          <Tool label="Zoom in" w="w-[37px]"><ZoomIn /></Tool>
          <Tool label="Zoom out" w="w-[25px]"><ZoomOut /></Tool>
          <Tool label="Zoom X" w="w-[37px]"><ZoomWave /></Tool>
          <Tool label="Zoom area" w="w-[25px]"><ZoomArea /></Tool>
          <Tool label="Zoom Y" w="w-[37px]"><ZoomY /></Tool>
          <Tool label="Zoom off" w="w-[28px]"><ZoomDim /></Tool>
        </Group>
        <Group>
          <Handle />
          <Combo label="Grouping" value="family" w="w-[78px]" pad="pl-0.5" />
          <Tool label="Split strips"><SplitStrips /></Tool>
          <Tool label="Combine strips"><CombineStrips /></Tool>
          <Tool label="Fit strips"><StripsY /></Tool>
          <Tool label="Append"><SwapStrip plus /></Tool>
          <Tool label="Replace"><SwapStrip /></Tool>
          <span className="w-[18px]" />
        </Group>
        <Group grow>
          <Handle />
          <Tool label="Grid" checked w="w-[28px]"><GridIcon /></Tool>
        </Group>
      </div>
      <div className="flex h-[30px] shrink-0">
        <Group>
          <Handle />
          <Tool label="Assistant" checked w="w-[28px]"><Wand /></Tool>
          <Tool label="Card layout"><Cards /></Tool>
          <Tool label="Rows"><RowsIcon /></Tool>
          <Tool label="Columns"><ColsIcon /></Tool>
          <span className="mx-0.5 text-[#222]">Subwindows:</span>
          <Combo label="Subwindows" value="1" w="w-[70px]" pad="pl-[18px]" />
        </Group>
        <Group>
          <Handle />
          <Tool label="Marker" w="w-[28px]"><Flag /></Tool>
          <span className="ml-0.5 flex">
            <Tool label="Info balloon" checked w="w-[28px]"><Info /></Tool>
          </span>
        </Group>
        <Group>
          <Handle />
          <Tool label="Previous" w="w-[28px]"><StepArrow /></Tool>
          <Tool label="Next"><StepArrow flip /></Tool>
          <span className="ml-0.5 flex">
            <Combo label="Step by" value="Data Point" w="w-[156px]" disabled pad="pl-0.5" />
          </span>
          <input
            aria-label="Position"
            disabled
            defaultValue="8900000u"
            className="ml-px h-7 w-20 shrink-0 rounded border border-[#b2b2b2] bg-[#e4e4e4] pl-0.5 text-base text-[#858585]"
          />
        </Group>
        <Group>
          <Handle />
          <Tool label="Histogram" w="w-[28px]"><Histogram /></Tool>
        </Group>
        <Group>
          <Handle />
          <Tool label="Calculator" w="w-[28px]"><Calc /></Tool>
        </Group>
        <Group grow>
          <Handle />
          <span className="ml-1 flex">
            <Combo label="Layout" value="Classic" w="w-[144px]" pad="pl-0.5" />
          </span>
          <Tool label="Save layout"><SaveView /></Tool>
          <Tool label="Hide layout"><HideView /></Tool>
        </Group>
      </div>

      {/* Document tab */}
      <div className="flex h-[31px] shrink-0 items-end">
        <div className="flex h-[29px] w-[256px] items-center border-r border-t-2 border-r-[#b0b0b0] border-t-[#cc0000] bg-[#f4f4f4] pl-2">
          <Svg w={17} h={17}>
            <rect x=".5" y=".5" width="15" height="15" fill="#fff" stroke="#aaa" />
            <path d="M3 3v10h10V3z" stroke="#111" strokeWidth="1.200" />
            <path d="M5 11l6-6" stroke="#111" />
          </Svg>
          <span className="ml-2 flex-1">4b_SAR_Vcm-based RS_L...</span>
          <button type="button" aria-label="Close tab" className="mr-2.5">
            <Svg w={8} h={8}>
              <path d="M1 1l6 6M7 1L1 7" stroke="#9a9a9a" strokeWidth="2" />
            </Svg>
          </button>
        </div>
      </div>

      {/* Graph window */}
      <main className="flex min-h-0 flex-1 flex-col border-b-2 border-l-2 border-r-2 border-t-2 border-b-black border-l-white border-r-[#555] border-t-white">
        <div className="flex min-h-0 flex-1 flex-col border-2 border-[#cc0000]">
          <div className="flex min-h-0 flex-1 flex-col border border-[#f6dada] bg-black">
            <div className={`${SERIF} flex h-[22px] shrink-0 justify-between overflow-hidden px-0.5 text-[15px] leading-[17px] text-[#e6e6e6]`}>
              <span className="w-16">Transient Response</span>
              <span className="flex">
                <span className="mr-[28px] w-[143px]">Wed May 10 16:30:17 2023</span>
                <span className="mr-0.5">1</span>
              </span>
            </div>
            <div className="flex h-[28px] shrink-0">
              <div className="w-[137px] shrink-0 border-r border-[#909090]">
                <div className="flex h-5 overflow-hidden bg-linear-to-b from-[#cfcfcf] to-[#9c9c9c] leading-[26px] text-[#1c1c1c]">
                  <span className="w-[104px] border-r border-[#888]">Name</span>
                  <span className="pl-[3px]">Vis</span>
                </div>
              </div>
              <div className="min-w-0 flex-1">
                <Overview />
              </div>
            </div>
            {STRIPS.map((s, i) => (
              <div key={i} className="flex min-h-0 flex-1">
                <div className={`w-[137px] shrink-0 border-r border-[#909090] ${i === 2 ? "flex" : ""}`}>
                  {i === 2 && <span className="-mr-[3px] mt-1 w-[3px] bg-[#ffff00]" />}
                  <ul className="w-full pt-2">
                    {LEGENDS[i].map((l) => (
                      <li key={l.name} className="flex h-[27px] items-center text-white">
                        <span className="-mt-4 ml-1 h-4 w-1 border-b border-l border-dotted border-[#666]" />
                        <span className={`ml-1 h-[10px] w-[15px] ${l.swatch}`} />
                        <span className="ml-[7px] w-[75px]">{l.name}</span>
                        <button type="button" aria-label={`Show ${l.name}`}>
                          <Eye />
                        </button>
                      </li>
                    ))}
                  </ul>
                </div>
                <StripChart data={s} />
              </div>
            ))}
            <div className="flex h-[52px] shrink-0">
              <div className="w-[137px] shrink-0 border-r border-[#909090]" />
              <TimeAxis />
            </div>
          </div>
        </div>
      </main>

      {/* Mouse bindings */}
      <div className="flex h-[25px] shrink-0 items-center border-b border-[#8c8c8c] bg-linear-to-b from-[#ebebeb] to-[#b8b8b8] pr-[9px]">
        <Handle />
        <span className="ml-0.5 flex-1">mouse L:</span>
        <span>M:</span>
        <span className="flex-1 text-right">R:</span>
      </div>

      {/* Status bar */}
      <footer className="relative flex h-[29px] shrink-0 items-center border-b border-[#555] pt-px">
        <span className="ml-px flex h-[27px] items-center border-r border-[#555] bg-[#f8d9db] pl-[3px] pr-[5px]">56(119)</span>
        <span className="ml-[9px] flex-1">Trace: /Do-; Context: /home/disk/simulation/SIM_IC61/RS_Latch_TB/spectre/schematic/psf; Dataset: tran-tran</span>
        <span className="absolute left-[1084px] top-2 font-['Liberation_Sans',sans-serif] text-xs font-bold leading-5 text-[#003c3c]">bbs.eetop.cn</span>
        <span className="mr-1 h-[22px] w-[9px] border border-[#666] border-l-[#999] bg-[#9c9c9e]" />
      </footer>
    </div>
  );
}
